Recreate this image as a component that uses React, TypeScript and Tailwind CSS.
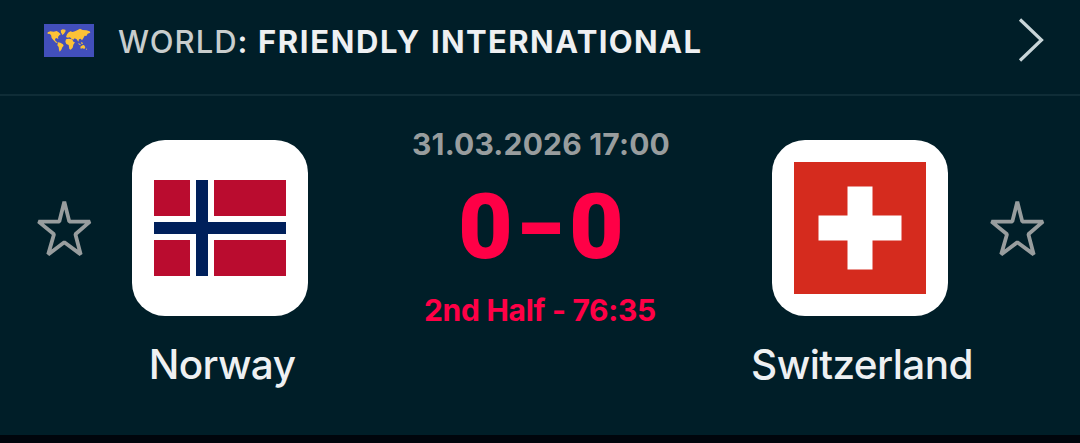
import type { ReactNode } from 'react';

function WorldFlag() {
  return (
    <svg className="h-[33px] w-[50px] shrink-0" viewBox="0 0 150 99" aria-hidden="true">
      <path fill="#424fbb" d="M0 0h150v99H0z" />
      <g fill="#fcc236">
        <path d="M11 25l8-3 10 1 9-2 6 4 6 6-4 3-4 5 1 6-6-3-4 3 1 5 4 3 3 4-5-1-8-8-5-6-2-9-5-4-5 1z" />
        <path d="M50 19l6-3 8 1 1 4-5 8-5 4-4-8z" />
        <path d="M42 55l7 1 8 5 2 4-4 5-3 7-5 6-2-6-1-8-4-5z" />
        <path d="M69 31l5-6 6-3 5 2 8-2 8-4 7-4 8 4 11 1 10 3 2 4-8 3-4 7-5-1-4 8-4 6-4-5-5 2-2 7-5-7-6-3-4 4-6-3-4-4-7 1-5-2 2-5z" />
        <path d="M66 46l8-2 10 2 5 8 4 1-5 7-2 9-6 6-4-2-2-12-7-3-3-7z" />
        <path d="M104 57l7 5-2 2-6-4zM112 54l5 3-2 4-4-3z" />
        <path d="M109 68l6-4 5-1 4 7-3 5-5-2-6 1zM126 73l3 3-3 2z" />
      </g>
    </svg>
  );
}

function Star() {
  return (
    <button className="shrink-0 text-[#989d9e]" aria-label="Favourite">
      <svg
        className="h-[58px] w-[56px]"
        viewBox="0 0 56 58"
        fill="none"
        stroke="currentColor"
        strokeWidth="3.8"
        strokeLinejoin="bevel"
      >
        <path d="M28.3 2.6 33.3 22.6H54L39.4 35.3 44.7 55.4 28.3 43.3 12.2 55.4 18 35.3 2.5 22.6H23.3Z" />
      </svg>
    </button>
  );
}

function NorwayFlag() {
  return (
    <svg className="h-24 w-[132px]" viewBox="0 0 22 16">
      <path fill="#ba0c2f" d="M0 0h22v16H0z" />
      <path stroke="#fff" strokeWidth="4" d="M8 0v16M0 8h22" />
      <path stroke="#00205b" strokeWidth="2" d="M8 0v16M0 8h22" />
    </svg>
  );
}

function SwissFlag() {
  return (
    <svg className="size-[132px]" viewBox="0 0 132 132">
      <path fill="#d52b1e" d="M0 0h132v132H0z" />
      <path stroke="#fff" strokeWidth="25" d="M66 24.5v83M24.5 66h83" />
    </svg>
  );
}

function Team({ name, children }: { name: string; children: ReactNode }) {
  return (
    <div className="flex w-[176px] flex-col items-center">
      <div className="flex size-[176px] items-center justify-center rounded-[33px] bg-white">
        {children}
      </div>
      <div className="mt-6 ml-1 whitespace-nowrap text-[40.5px] leading-[50px] font-[550] tracking-[-0.6px] text-[#eef0f2]">
        {name}
      </div>
    </div>
  );
}

export default function App() {
  return (
    <div className="h-[443px] w-[1080px] overflow-hidden bg-[#00050c] font-['Inter',sans-serif]">
      <header className="flex h-24 items-center border-b-2 border-[#0f2d37] bg-[#001e28] pr-9 pb-3.5 pl-11">
        <WorldFlag />
        <h1 className="mt-[3px] ml-6 flex flex-1 whitespace-nowrap text-[31px] leading-10 text-[#eef0f2]">
          <span className="w-[140px] font-[450] tracking-[1px] text-[#c8cdcd]">
            WORLD<span className="font-semibold text-[#eef0f2]">:</span>
          </span>
          <span className="w-[173px] font-bold tracking-[1.65px]">FRIENDLY</span>
          <span className="font-bold tracking-[1.35px]">INTERNATIONAL</span>
        </h1>
        <svg
          className="h-[46px] w-[26px] text-[#c8d5d8]"
          viewBox="0 0 26 46"
          fill="none"
          stroke="currentColor"
          strokeWidth="3.2"
        >
          <path d="M2 2.5 23.5 23 2 43.5" />
        </svg>
      </header>

      <main className="flex h-[339px] items-start bg-[#001e28] pr-[35px] pl-9">
        <div className="mt-[103px]">
          <Star />
        </div>
        <div className="mt-11 ml-10">
          <Team name="Norway">
            <NorwayFlag />
          </Team>
        </div>
        <section className="flex flex-1 flex-col items-center whitespace-nowrap pt-7">
          <time className="ml-0.5 text-[30px] leading-10 font-bold tracking-[0.2px] text-[#989d9e]">
            31.03.2026 17:00
          </time>
          <div className="mt-[17px] ml-0.5 flex h-[92px] items-center gap-[9px] font-['Roboto',sans-serif] text-[91px] leading-[92px] font-black text-[#ff0046]">
            <span className="scale-x-[1.04]">0</span>
            <span className="-mt-1 scale-x-[1.42]">-</span>
            <span className="scale-x-[1.04]">0</span>
          </div>
          <div className="mt-[17px] text-[30px] leading-10 font-bold tracking-[-0.3px] text-[#ff0046]">
            2nd Half - 76:35
          </div>
        </section>
        <div className="mt-11 mr-[41px]">
          <Team name="Switzerland">
            <SwissFlag />
          </Team>
        </div>
        <div className="mt-[103px]">
          <Star />
        </div>
      </main>
    </div>
  );
}
